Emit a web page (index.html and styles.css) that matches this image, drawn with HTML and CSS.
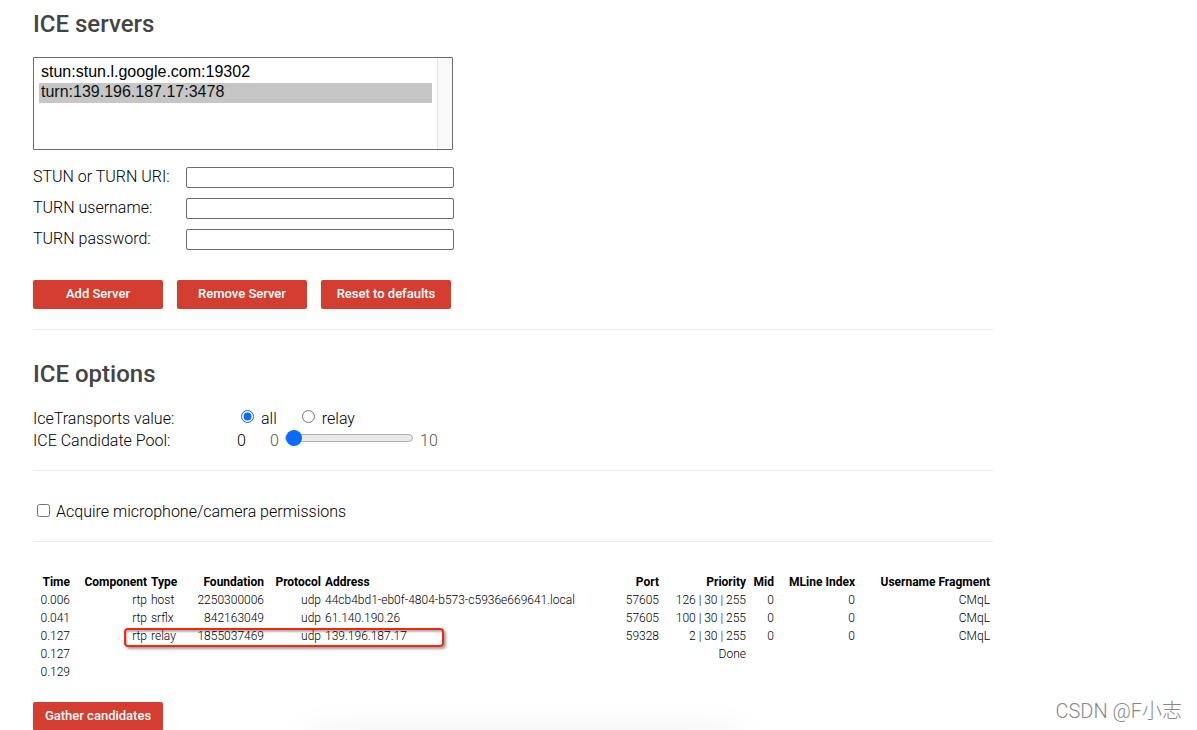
FILE: index.html
```html
<!DOCTYPE html>
<html lang="en">
<head>
<meta charset="utf-8">
<title>Trickle ICE</title>
<link rel="stylesheet" href="styles.css">
</head>
<body>
<main class="container">
  <section class="servers">
    <h2>ICE servers</h2>
    <select class="server-list" size="4" aria-label="ICE servers">
      <option>stun:stun.l.google.com:19302</option>
      <option class="current" selected>turn:139.196.187.17:3478</option>
    </select>
    <div class="field"><label for="url">STUN or TURN URI:</label><input id="url" type="text"></div>
    <div class="field"><label for="username">TURN username:</label><input id="username" type="text"></div>
    <div class="field"><label for="password">TURN password:</label><input id="password" type="text"></div>
    <div class="buttons">
      <button type="button">Add Server</button>
      <button type="button">Remove Server</button>
      <button type="button">Reset to defaults</button>
    </div>
  </section>

  <section class="options">
    <h2>ICE options</h2>
    <div class="option-row">
      <span class="option-name">IceTransports value:</span>
      <input class="radio" type="radio" name="transports" id="all" checked><label class="radio-label" for="all">all</label>
      <input class="radio" type="radio" name="transports" id="relay"><label class="radio-label" for="relay">relay</label>
    </div>
    <div class="option-row">
      <label class="option-name" for="pool">ICE Candidate Pool:</label>
      <span class="pool-value">0</span>
      <span class="limit">0</span>
      <input class="pool" id="pool" type="range" min="0" max="10" value="0">
      <span class="limit">10</span>
    </div>
  </section>

  <section class="permissions">
    <input class="check" type="checkbox" id="media"><label for="media">Acquire microphone/camera permissions</label>
  </section>

  <section class="results">
    <div class="table-wrap">
      <table>
        <colgroup>
          <col class="c-time"><col class="c-component"><col class="c-type"><col class="c-foundation"><col class="c-protocol"><col><col class="c-port"><col class="c-priority"><col class="c-mid"><col class="c-mline"><col class="c-fragment">
        </colgroup>
        <thead>
          <tr><th>Time</th><th>Component</th><th class="left">Type</th><th>Foundation</th><th>Protocol</th><th class="left">Address</th><th>Port</th><th>Priority</th><th>Mid</th><th>MLine Index</th><th>Username Fragment</th></tr>
        </thead>
        <tbody>
          <tr><td>0.006</td><td>rtp</td><td class="left">host</td><td>2250300006</td><td>udp</td><td class="left">44cb4bd1-eb0f-4804-b573-c5936e669641.local</td><td>57605</td><td>126 | 30 | 255</td><td>0</td><td>0</td><td>CMqL</td></tr>
          <tr><td>0.041</td><td>rtp</td><td class="left">srflx</td><td>842163049</td><td>udp</td><td class="left">61.140.190.26</td><td>57605</td><td>100 | 30 | 255</td><td>0</td><td>0</td><td>CMqL</td></tr>
          <tr><td>0.127</td><td>rtp</td><td class="left">relay</td><td>1855037469</td><td>udp</td><td class="left">139.196.187.17</td><td>59328</td><td>2 | 30 | 255</td><td>0</td><td>0</td><td>CMqL</td></tr>
          <tr><td>0.127</td><td></td><td></td><td></td><td></td><td></td><td></td><td>Done</td><td></td><td></td><td></td></tr>
          <tr><td>0.129</td><td></td><td></td><td></td><td></td><td></td><td></td><td></td><td></td><td></td><td></td></tr>
        </tbody>
      </table>
      <div class="highlight"></div>
    </div>
    <button type="button">Gather candidates</button>
  </section>
</main>
<div class="shade"></div>
<div class="watermark">CSDN @F小志</div>
</body>
</html>
```
FILE: styles.css
```css
* { box-sizing: border-box; }

body {
  position: relative;
  height: 100vh;
  margin: 0;
  overflow: hidden;
  background: #fff;
  color: #000;
  font: 300 16px/22px Roboto, sans-serif;
}

.container {
  max-width: 1026px;
  padding: 0 33px;
}

section { border-bottom: 1px solid #eaeaea; }

h2 {
  margin: 0;
  color: #444;
  font-size: 24px;
  font-weight: 500;
  line-height: 28px;
}

.servers { padding: 10px 0 20px; }

.server-list {
  display: block;
  width: 420px;
  max-width: 100%;
  height: 93px;
  margin: 19px 0 16px;
  padding: 5px 20px 5px 5px;
  overflow: hidden;
  border: 1px solid #6b6b6b;
  border-radius: 1px;
  background:
    linear-gradient(to right, #e4e4e4 1px, #f9f9f9 1px) right / 15px 100% no-repeat,
    #fff;
  color: #000;
  font: 16px/20px "Liberation Sans", Arial, sans-serif;
}

.server-list option {
  height: 20px;
  min-height: 20px;
  padding: 0 2px;
  line-height: 18px;
}

.server-list .current {
  background: #c6c6c6 linear-gradient(#c6c6c6, #c6c6c6);
}

.field {
  display: flex;
  align-items: center;
  height: 22px;
  margin-bottom: 9px;
}

.field label { width: 153px; }

.field input {
  width: 268px;
  height: 21px;
  padding: 1px 2px;
  border: 1px solid #6b6b6b;
  border-radius: 2px;
  background: #fff;
}

.buttons {
  display: flex;
  gap: 14px;
  margin-top: 30px;
}

button {
  width: 130px;
  height: 29px;
  padding: 0 0 2px;
  border: 0;
  border-radius: 2px;
  background: #d33e30;
  color: #fff;
  font: 500 13px/27px Roboto, sans-serif;
}

.options { padding: 30px 0 18px; }

.options h2 { margin-bottom: 20px; }

.option-row {
  display: flex;
  align-items: center;
  height: 22px;
}

.option-name { width: 204px; }

.radio {
  width: 13px;
  height: 13px;
  margin: 0 7px 5px 4px;
  accent-color: #0a6cff;
}

.radio-label { margin-right: 21px; }

.pool-value { width: 33px; }

.limit {
  min-width: 20px;
  padding-left: 5px;
  color: #555;
}

.pool-value + .limit {
  min-width: 15px;
  padding: 0;
}

.pool {
  width: 128px;
  height: 16px;
  margin: 0 2px 6px 0;
  appearance: none;
  background: transparent;
}

.pool::-webkit-slider-runnable-track {
  height: 8px;
  border: 1px solid #b2b2b2;
  border-radius: 4px;
  background: #eaeaea;
}

.pool::-webkit-slider-thumb {
  width: 16px;
  height: 16px;
  margin-top: -5px;
  appearance: none;
  border-radius: 50%;
  background: #0a6cff;
}

.permissions {
  display: flex;
  align-items: center;
  padding: 30px 0 18px;
}

.check {
  width: 13px;
  height: 13px;
  margin: 0 6px 3px 4px;
}

.results {
  padding-top: 30px;
  border: 0;
}

.table-wrap {
  position: relative;
  margin-bottom: 20px;
}

table {
  width: 100%;
  table-layout: fixed;
  border-collapse: separate;
  border-spacing: 2px;
  font-size: 12px;
  line-height: 14px;
}

th, td {
  height: 16px;
  padding: 1px;
  text-align: right;
  white-space: nowrap;
}

th { font-weight: 700; }

.left { text-align: left; }

.c-time { width: 36px; }
.c-component { width: 75px; }
.c-type { width: 40px; }
.c-foundation { width: 73px; }
.c-protocol { width: 55px; }
.c-port { width: 58px; }
.c-priority { width: 85px; }
.c-mid { width: 26px; }
.c-mline { width: 79px; }
.c-fragment { width: 133px; }

.highlight {
  position: absolute;
  top: 56px;
  left: 91px;
  width: 320px;
  height: 19px;
  border: 2px solid #fa230c;
  border-radius: 4px;
  box-shadow: 2px 2px 3px rgba(0, 0, 0, .4), inset 1px 2px 2px rgba(0, 0, 0, .3);
}

.shade {
  position: absolute;
  bottom: -26px;
  left: 320px;
  width: 410px;
  height: 10px;
  box-shadow: 0 0 40px 10px rgba(0, 0, 0, .08);
}

.watermark {
  position: absolute;
  right: 15px;
  bottom: 4px;
  color: #888;
  font: 300 20px/30px Roboto, "Noto Sans CJK SC", sans-serif;
}
```
